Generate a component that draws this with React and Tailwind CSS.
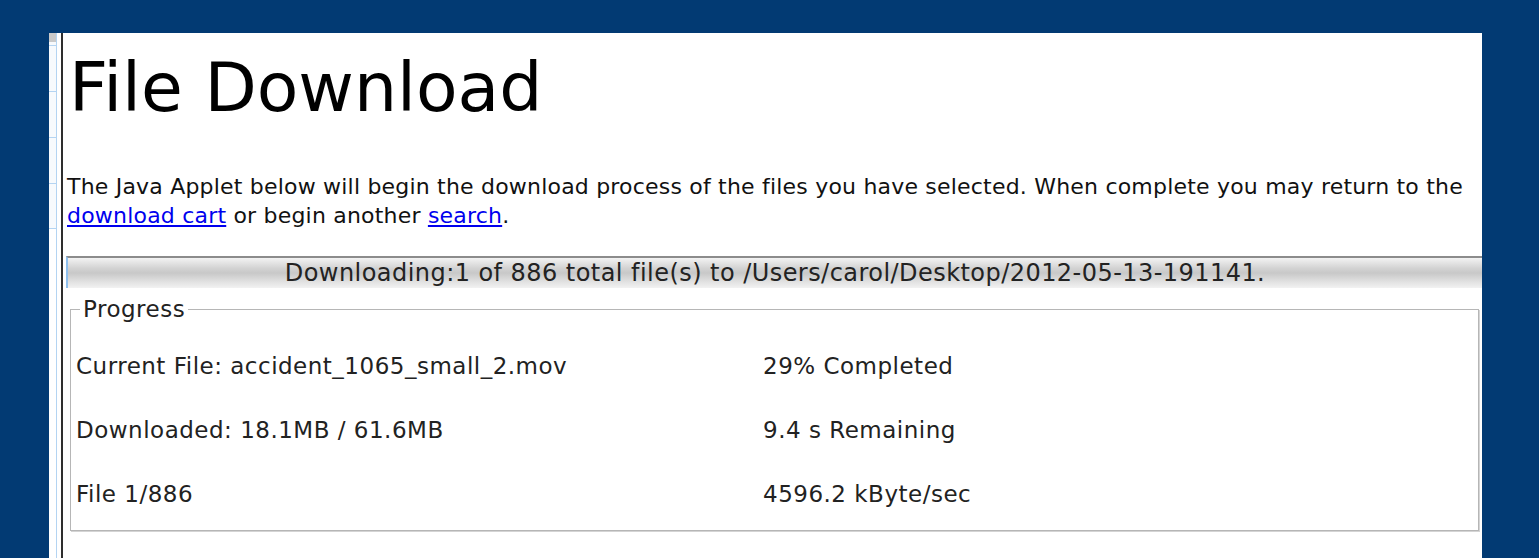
import React from 'react';

const stats = [
  ['Current File: accident_1065_small_2.mov', '29% Completed'],
  ['Downloaded: 18.1MB / 61.6MB', '9.4 s Remaining'],
  ['File 1/886', '4596.2 kByte/sec'],
];

// the sliver of the neighbouring frame, mostly scrolled out of view
function SideStrip() {
  return (
    <div className="w-[8px] flex flex-col border-r border-[#b4d4f2] bg-[#f7fafd]">
      <div className="h-[9px] bg-[#c9c9c9]" />
      <div className="h-[46px] border-t border-[#b4d4f2] mt-[3px]" />
      <div className="h-[46px] border-t border-[#b4d4f2]" />
      <div className="h-[46px] border-t border-[#b4d4f2]" />
      <div className="h-[46px] border-t border-b border-[#b4d4f2]" />
      <div className="flex-1 bg-white" />
    </div>
  );
}

function Applet() {
  return (
    <div className="text-[#222] text-[23px] tracking-[0.5px]">
      <div className="h-[32px] flex items-center justify-center text-[24px] tracking-[0.45px] border-t-2 border-t-[#8c8c8c] border-l-2 border-l-[#8fc0ee] bg-[linear-gradient(to_bottom,#f3f3f3_0%,#d2d2d2_35%,#c8c8c8_50%,#e2e2e2_80%,#f2f2f2_100%)]">
        Downloading:1 of 886 total file(s) to /Users/carol/Desktop/2012-05-13-191141.
      </div>
      <fieldset className="mt-[8px] ml-[4px] mr-[3px] border border-[#b6b6b6] shadow-[1px_1px_0_#d4d4d4] pl-[5px] pt-[12px] pb-[4px]">
        <legend className="ml-[4px] px-[3px] leading-[26px]">Progress</legend>
        {stats.map(([a, b]) => (
          <div key={a} className="grid grid-cols-[687px_1fr] h-[64px] items-center">
            <span>{a}</span>
            <span>{b}</span>
          </div>
        ))}
      </fieldset>
    </div>
  );
}

export default function App() {
  return (
    <div className="h-[558px] bg-[#023a73] pt-[33px] pl-[49px] overflow-hidden" style={{ fontFamily: '"DejaVu Sans", Verdana, sans-serif' }}>
      <div className="flex w-[1433px] h-[525px] bg-white overflow-hidden">
        <SideStrip />
        <div className="w-[4px]" />
        <div className="w-[2px] bg-[#2e2e2e]" />
        <div className="flex-1 pl-[3px]">
          <h1 className="ml-[3px] mt-[21px] text-[68px] leading-none text-black">File Download</h1>
          <p className="ml-[1px] mt-[50px] text-[22px] tracking-[0.2px] leading-[29px] text-[#111]">
            The Java Applet below will begin the download process of the files you have selected. When complete you may return to the
            <br />
            <a href="#" className="text-[#0000ee] underline">download cart</a> or begin another{' '}
            <a href="#" className="text-[#0000ee] underline">search</a>.
          </p>
          <div className="mt-[26px]">
            <Applet />
          </div>
        </div>
      </div>
    </div>
  );
}
